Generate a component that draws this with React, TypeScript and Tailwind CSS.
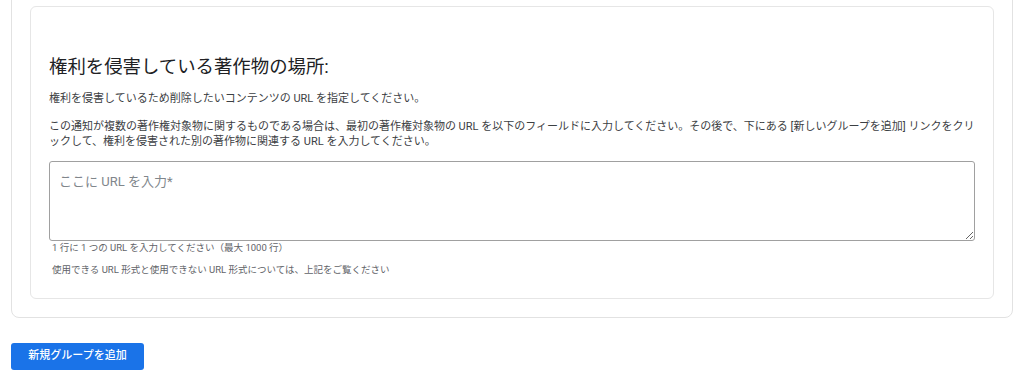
const font = { fontFamily: "Roboto, 'Noto Sans CJK JP', sans-serif" };

export default function App() {
  return (
    <div className="bg-white min-h-screen px-[11px]" style={font}>
      {/* outer card, its top edge sits just above the viewport */}
      <div className="mt-[-13px] rounded-[8px] border border-[#e2e2e2] p-[18px]">
        <div className="rounded-[6px] border border-[#e6e6e6] px-[18px] pt-[48px] pb-[21px]">
          <h2 className="text-[18.4px] leading-[24px] text-[#202124]">
            権利を侵害している著作物の場所:
          </h2>
          <p className="mt-[12px] text-[11px] leading-[15px] text-[#3c4043]">
            権利を侵害しているため削除したいコンテンツの URL を指定してください。
          </p>
          <p className="mt-[13px] mr-[-4px] text-[11px] leading-[15px] text-[#3c4043] [line-break:loose]">
            この通知が複数の著作権対象物に関するものである場合は、最初の著作権対象物の URL を以下のフィールドに入力してください。その後で、下にある [新しいグループを追加] リンクをクリックして、権利を侵害された別の著作物に関連する URL を入力してください。
          </p>
          <textarea
            className="mt-[12px] block h-[80px] w-full rounded-[3px] border border-[#a0a0a0] px-[9px] py-[10px] text-[13px] leading-[20px] text-[#202124] placeholder:text-[#80868b] outline-none"
            placeholder="ここに URL を入力*"
          />
          <p className="pl-[3px] text-[9.5px] leading-[14px] text-[#5f6368]">
            1 行に 1 つの URL を入力してください（最大 1000 行）
          </p>
          <p className="mt-[8px] pl-[3px] text-[9.5px] leading-[14px] text-[#5f6368]">
            使用できる URL 形式と使用できない URL 形式については、上記をご覧ください
          </p>
        </div>
      </div>
      <button className="mt-[25px] h-[27px] w-[133px] rounded-[3px] bg-[#1a73e8] text-[11px] font-medium text-white">
        新規グループを追加
      </button>
    </div>
  );
}
